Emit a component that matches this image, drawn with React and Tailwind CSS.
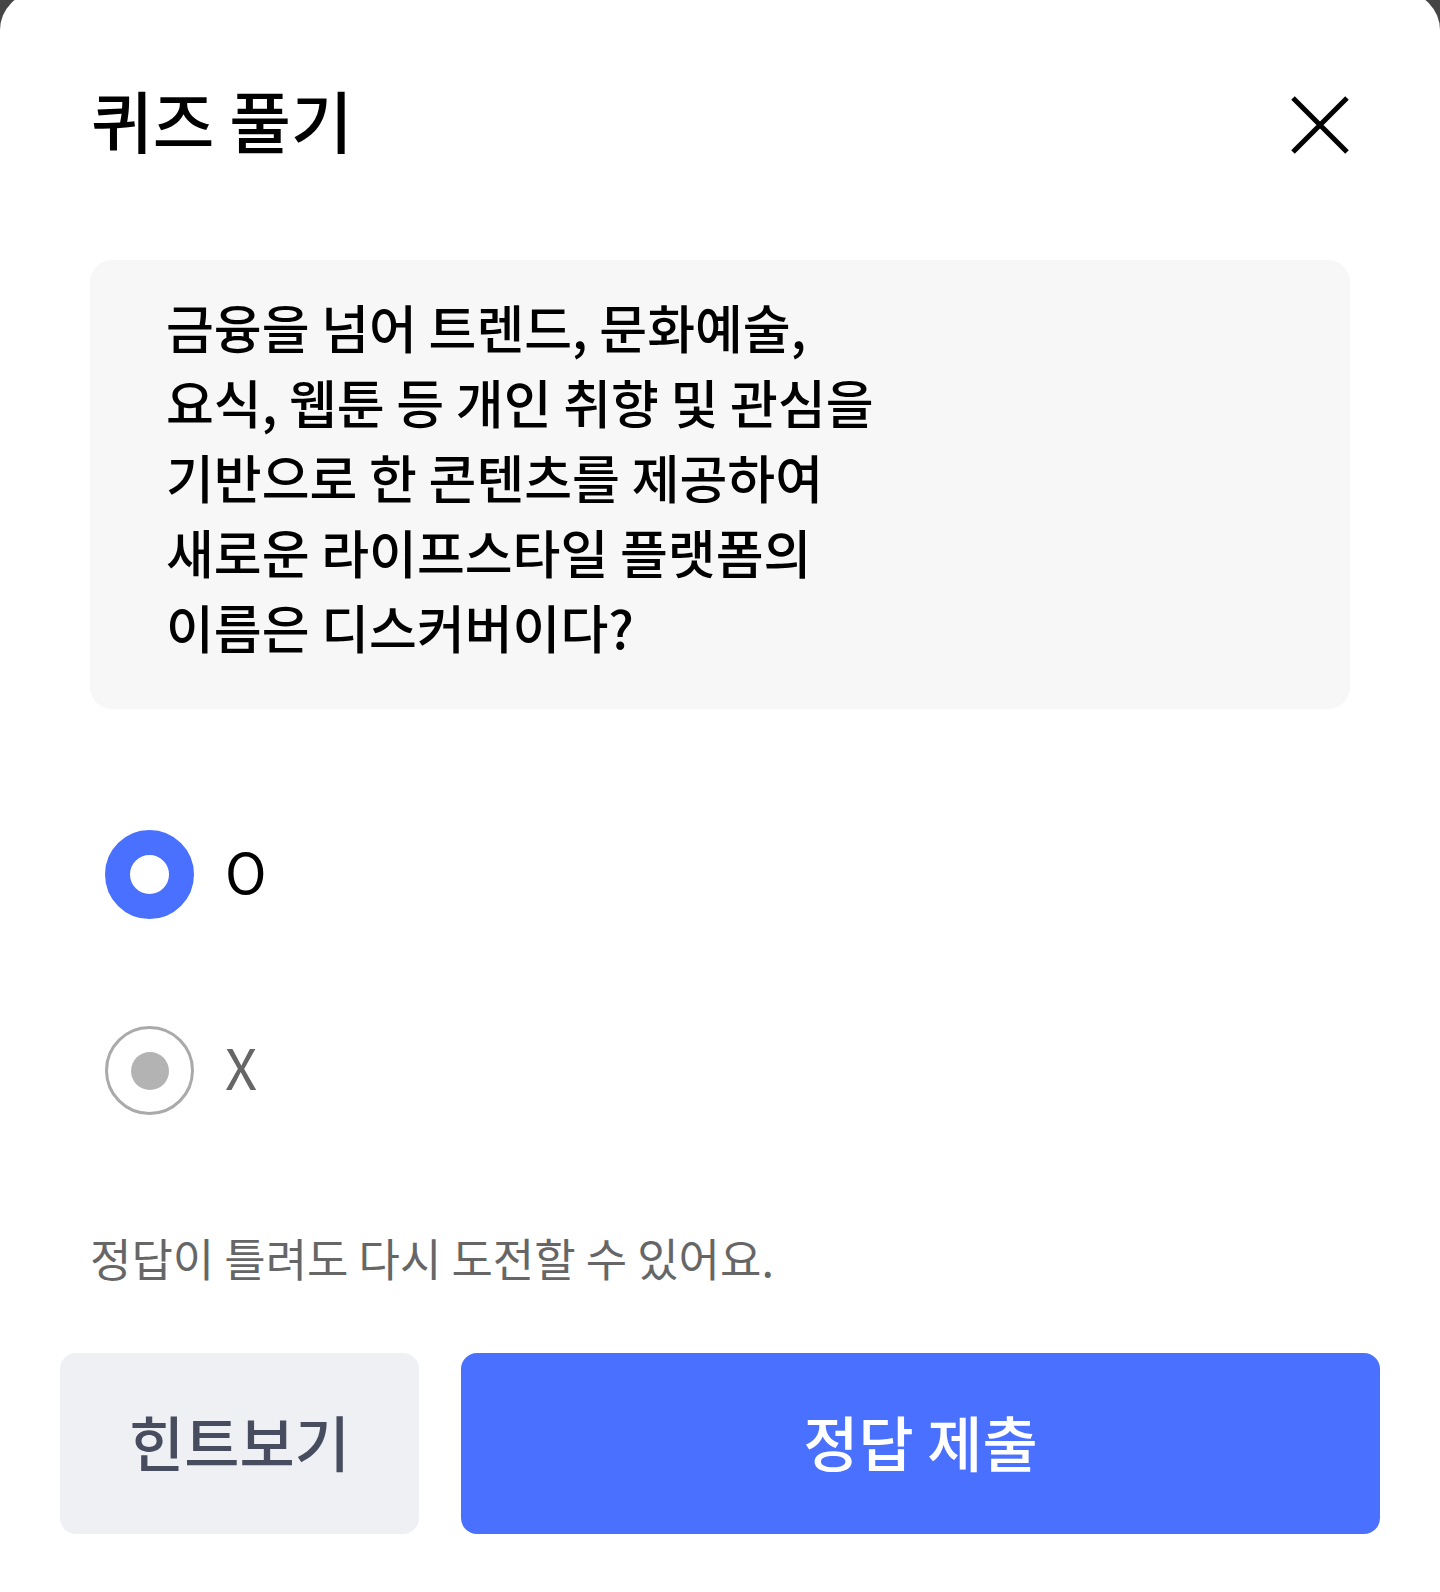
import React, { useState } from 'react';

const FONT = { fontFamily: '"Noto Sans CJK KR", "Noto Sans", sans-serif' };

const lines = [
  '금융을 넘어 트렌드, 문화예술,',
  '요식, 웹툰 등 개인 취향 및 관심을',
  '기반으로 한 콘텐츠를 제공하여',
  '새로운 라이프스타일 플랫폼의',
  '이름은 디스커버이다?',
];

const Radio = ({ checked, label, onClick }) => (
  <button type="button" onClick={onClick} className="flex items-center gap-[31px] h-[89px]">
    {checked ? (
      <span className="w-[89px] h-[89px] rounded-full border-[25px] border-[#4a70ff] bg-white" />
    ) : (
      <span className="w-[89px] h-[89px] rounded-full border-[3px] border-[#aaaaaa] bg-white flex items-center justify-center">
        <span className="w-[38px] h-[38px] rounded-full bg-[#b3b3b3]" />
      </span>
    )}
    <span className={`text-[56px] leading-none -mt-[10px] ${checked ? 'text-black' : 'text-[#666666]'}`}>{label}</span>
  </button>
);

export default function App() {
  const [answer, setAnswer] = useState('O');

  return (
    <div className="h-[1592px] bg-[#454545] overflow-hidden" style={FONT}>
      <div className="-mt-[8px] h-[1600px] bg-white rounded-t-[38px] pt-[93px]">
        <div className="flex justify-between items-start pl-[91px] pr-[91px]">
          <h1 className="text-[67px] leading-none font-medium text-black">퀴즈 풀기</h1>
          <button type="button" className="mt-[11px]">
            <svg width="58" height="58" viewBox="0 0 58 58" fill="none" stroke="black" strokeWidth="5">
              <path d="M2 2L56 56M56 2L2 56" />
            </svg>
          </button>
        </div>

        <div className="mt-[106px] mx-[90px] h-[449px] rounded-[22px] bg-[#f7f7f7] pl-[76px] pt-[29px]">
          {lines.map((l) => (
            <p key={l} className="text-[52px] leading-[75px] font-medium text-black">{l}</p>
          ))}
        </div>

        <div className="mt-[121px] ml-[105px] flex flex-col gap-[107px] items-start">
          <Radio checked={answer === 'O'} label="O" onClick={() => setAnswer('O')} />
          <Radio checked={answer === 'X'} label="X" onClick={() => setAnswer('X')} />
        </div>

        <p className="mt-[113px] ml-[90px] text-[45px] leading-[60px] text-[#666666]">정답이 틀려도 다시 도전할 수 있어요.</p>

        <div className="mt-[65px] px-[60px] flex gap-[42px]">
          <button type="button" className="w-[359px] h-[181px] pb-[6px] rounded-[16px] bg-[#eef0f4] text-[#474c5e] text-[60px] font-medium">힌트보기</button>
          <button type="button" className="flex-1 h-[181px] pb-[6px] rounded-[16px] bg-[#4a70ff] text-white text-[60px] font-medium">정답 제출</button>
        </div>
      </div>
    </div>
  );
}
